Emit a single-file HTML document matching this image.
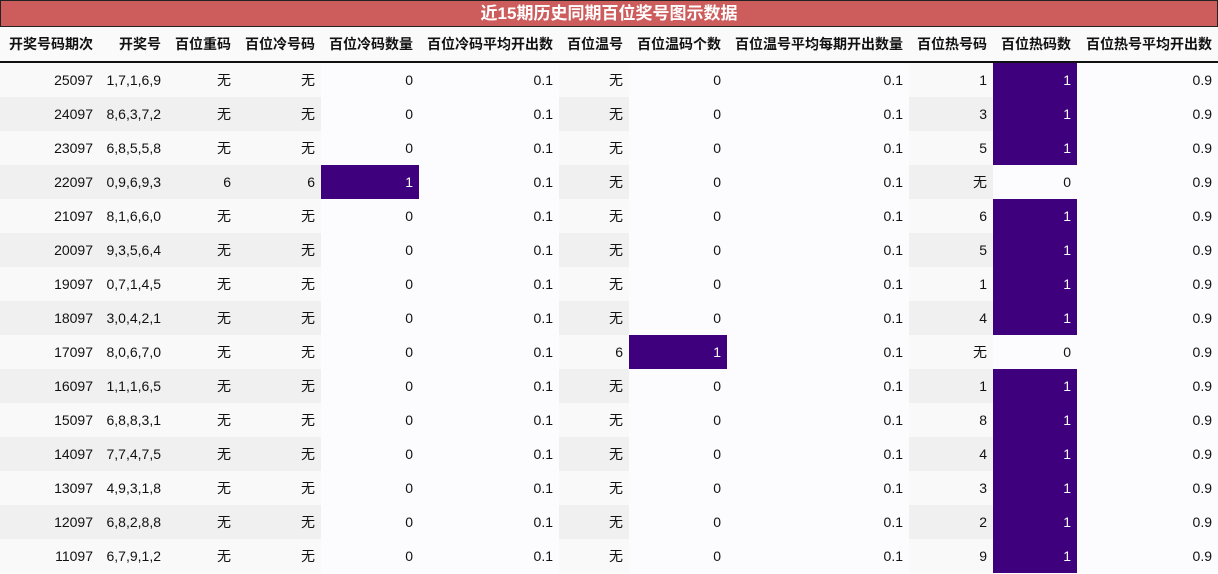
<!DOCTYPE html>
<html><head><meta charset="utf-8"><style>
body{margin:0;background:#fff;font-family:"Liberation Sans","Noto Sans CJK SC",sans-serif;}
.t{position:absolute;left:0;top:0;width:1216px;height:25px;background:#cd5c5c;border:1px solid #222;color:#fff;font-weight:bold;font-size:17px;text-align:center;line-height:26px;}
table{position:absolute;left:0;top:27px;border-collapse:collapse;table-layout:fixed;width:1218px;font-size:14px;color:#111;}
th{height:34px;background:#fafafa;border-bottom:2px solid #111;font-weight:bold;text-align:right;padding:0 6px 0 0;white-space:nowrap;}
td{height:34px;padding:0 6px 0 0;text-align:right;white-space:nowrap;}
tr.a td.g{background:#f9f9f9}
tr.b td.g{background:#f0f0f0}
td.p{background:#fcfbfd}
td.h{background:#3f007d;color:#fff}
</style></head><body>
<div class="t">近15期历史同期百位奖号图示数据</div>
<table>
<colgroup><col style="width:99px"><col style="width:68px"><col style="width:70px"><col style="width:84px"><col style="width:98px"><col style="width:140px"><col style="width:70px"><col style="width:98px"><col style="width:182px"><col style="width:84px"><col style="width:84px"><col style="width:141px"></colgroup>
<tr><th>开奖号码期次</th><th>开奖号</th><th>百位重码</th><th>百位冷号码</th><th>百位冷码数量</th><th>百位冷码平均开出数</th><th>百位温号</th><th>百位温码个数</th><th>百位温号平均每期开出数量</th><th>百位热号码</th><th>百位热码数</th><th>百位热号平均开出数</th></tr>
<tr class="a"><td class="g">25097</td><td class="g">1,7,1,6,9</td><td class="g">无</td><td class="g">无</td><td class="p">0</td><td class="p">0.1</td><td class="g">无</td><td class="p">0</td><td class="p">0.1</td><td class="g">1</td><td class="h">1</td><td class="p">0.9</td></tr>
<tr class="b"><td class="g">24097</td><td class="g">8,6,3,7,2</td><td class="g">无</td><td class="g">无</td><td class="p">0</td><td class="p">0.1</td><td class="g">无</td><td class="p">0</td><td class="p">0.1</td><td class="g">3</td><td class="h">1</td><td class="p">0.9</td></tr>
<tr class="a"><td class="g">23097</td><td class="g">6,8,5,5,8</td><td class="g">无</td><td class="g">无</td><td class="p">0</td><td class="p">0.1</td><td class="g">无</td><td class="p">0</td><td class="p">0.1</td><td class="g">5</td><td class="h">1</td><td class="p">0.9</td></tr>
<tr class="b"><td class="g">22097</td><td class="g">0,9,6,9,3</td><td class="g">6</td><td class="g">6</td><td class="h">1</td><td class="p">0.1</td><td class="g">无</td><td class="p">0</td><td class="p">0.1</td><td class="g">无</td><td class="p">0</td><td class="p">0.9</td></tr>
<tr class="a"><td class="g">21097</td><td class="g">8,1,6,6,0</td><td class="g">无</td><td class="g">无</td><td class="p">0</td><td class="p">0.1</td><td class="g">无</td><td class="p">0</td><td class="p">0.1</td><td class="g">6</td><td class="h">1</td><td class="p">0.9</td></tr>
<tr class="b"><td class="g">20097</td><td class="g">9,3,5,6,4</td><td class="g">无</td><td class="g">无</td><td class="p">0</td><td class="p">0.1</td><td class="g">无</td><td class="p">0</td><td class="p">0.1</td><td class="g">5</td><td class="h">1</td><td class="p">0.9</td></tr>
<tr class="a"><td class="g">19097</td><td class="g">0,7,1,4,5</td><td class="g">无</td><td class="g">无</td><td class="p">0</td><td class="p">0.1</td><td class="g">无</td><td class="p">0</td><td class="p">0.1</td><td class="g">1</td><td class="h">1</td><td class="p">0.9</td></tr>
<tr class="b"><td class="g">18097</td><td class="g">3,0,4,2,1</td><td class="g">无</td><td class="g">无</td><td class="p">0</td><td class="p">0.1</td><td class="g">无</td><td class="p">0</td><td class="p">0.1</td><td class="g">4</td><td class="h">1</td><td class="p">0.9</td></tr>
<tr class="a"><td class="g">17097</td><td class="g">8,0,6,7,0</td><td class="g">无</td><td class="g">无</td><td class="p">0</td><td class="p">0.1</td><td class="g">6</td><td class="h">1</td><td class="p">0.1</td><td class="g">无</td><td class="p">0</td><td class="p">0.9</td></tr>
<tr class="b"><td class="g">16097</td><td class="g">1,1,1,6,5</td><td class="g">无</td><td class="g">无</td><td class="p">0</td><td class="p">0.1</td><td class="g">无</td><td class="p">0</td><td class="p">0.1</td><td class="g">1</td><td class="h">1</td><td class="p">0.9</td></tr>
<tr class="a"><td class="g">15097</td><td class="g">6,8,8,3,1</td><td class="g">无</td><td class="g">无</td><td class="p">0</td><td class="p">0.1</td><td class="g">无</td><td class="p">0</td><td class="p">0.1</td><td class="g">8</td><td class="h">1</td><td class="p">0.9</td></tr>
<tr class="b"><td class="g">14097</td><td class="g">7,7,4,7,5</td><td class="g">无</td><td class="g">无</td><td class="p">0</td><td class="p">0.1</td><td class="g">无</td><td class="p">0</td><td class="p">0.1</td><td class="g">4</td><td class="h">1</td><td class="p">0.9</td></tr>
<tr class="a"><td class="g">13097</td><td class="g">4,9,3,1,8</td><td class="g">无</td><td class="g">无</td><td class="p">0</td><td class="p">0.1</td><td class="g">无</td><td class="p">0</td><td class="p">0.1</td><td class="g">3</td><td class="h">1</td><td class="p">0.9</td></tr>
<tr class="b"><td class="g">12097</td><td class="g">6,8,2,8,8</td><td class="g">无</td><td class="g">无</td><td class="p">0</td><td class="p">0.1</td><td class="g">无</td><td class="p">0</td><td class="p">0.1</td><td class="g">2</td><td class="h">1</td><td class="p">0.9</td></tr>
<tr class="a"><td class="g">11097</td><td class="g">6,7,9,1,2</td><td class="g">无</td><td class="g">无</td><td class="p">0</td><td class="p">0.1</td><td class="g">无</td><td class="p">0</td><td class="p">0.1</td><td class="g">9</td><td class="h">1</td><td class="p">0.9</td></tr>
</table>
</body></html>
